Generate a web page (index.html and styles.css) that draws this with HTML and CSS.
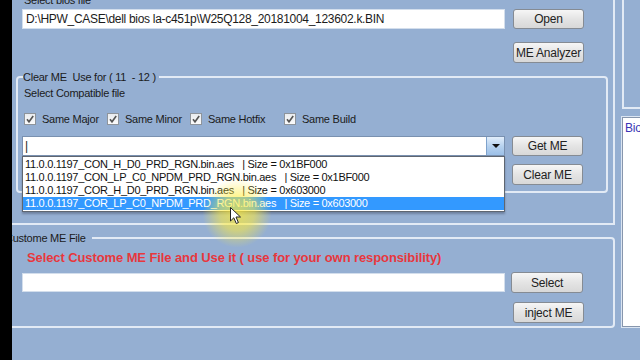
FILE: index.html
```html
<!DOCTYPE html>
<html lang="en">
<head>
  <meta charset="UTF-8">
  <meta name="viewport" content="width=device-width, initial-scale=1.0">
  <title>ME Tool</title>
  <link rel="stylesheet" href="styles.css">
</head>
<body>
  <div class="screen">
    <div class="edge"></div>

    <div class="main">
      <!-- bios file -->
      <div class="bios-group">
        <div class="caption">Select bios file</div>
        <div class="file-row">
          <div class="textbox">D:\HPW_CASE\dell bios la-c451p\W25Q128_20181004_123602.k.BIN</div>
          <button class="btn">Open</button>
          <span></span>
          <button class="btn btn-tall">ME Analyzer</button>
        </div>

        <fieldset class="group-box clear-me">
          <legend>Clear ME&nbsp; Use for ( 11&nbsp; - 12 )</legend>
          <div class="compat">Select Compatible file</div>
          <div class="checks">
            <label class="check"><span class="box"><svg width="10" height="10" viewBox="0 0 10 10"><path d="M2 5.2 L4 7.8 L8.2 2" fill="none" stroke="#555" stroke-width="1.6"/></svg></span>Same Major</label>
            <label class="check"><span class="box"><svg width="10" height="10" viewBox="0 0 10 10"><path d="M2 5.2 L4 7.8 L8.2 2" fill="none" stroke="#555" stroke-width="1.6"/></svg></span>Same Minor</label>
            <label class="check"><span class="box"><svg width="10" height="10" viewBox="0 0 10 10"><path d="M2 5.2 L4 7.8 L8.2 2" fill="none" stroke="#555" stroke-width="1.6"/></svg></span>Same Hotfix</label>
            <label class="check"><span class="box"><svg width="10" height="10" viewBox="0 0 10 10"><path d="M2 5.2 L4 7.8 L8.2 2" fill="none" stroke="#555" stroke-width="1.6"/></svg></span>Same Build</label>
          </div>
          <div class="combo-row">
            <div class="combo">
              <div class="combo-text">|</div>
              <div class="combo-arrow"><span class="tri"></span></div>
              <ul class="drop-list">
                <li>11.0.0.1197_CON_H_D0_PRD_RGN.bin.aes   | Size = 0x1BF000</li>
                <li>11.0.0.1197_CON_LP_C0_NPDM_PRD_RGN.bin.aes   | Size = 0x1BF000</li>
                <li>11.0.0.1197_COR_H_D0_PRD_RGN.bin.aes   | Size = 0x603000</li>
                <li class="selected">11.0.0.1197_COR_LP_C0_NPDM_PRD_RGN.bin.aes   | Size = 0x603000</li>
              </ul>
            </div>
            <button class="btn">Get ME</button>
            <span></span>
            <button class="btn btn-tall">Clear ME</button>
          </div>
        </fieldset>
      </div>

      <!-- custom ME -->
      <fieldset class="group-box custom">
        <legend>Custome ME File</legend>
        <div class="warn">Select Custome ME File and Use it ( use for your own responsibility)</div>
        <div class="inject-row">
          <div class="textbox textbox-low"></div>
          <button class="btn btn-tall">Select</button>
          <span></span>
          <button class="btn btn-tall btn-shift">inject ME</button>
        </div>
      </fieldset>
    </div>

    <div class="side">
      <div class="side-top"></div>
      <div class="side-list">Bios</div>
    </div>

    <div class="glow"></div>
    <svg class="pointer" width="12" height="18" viewBox="0 0 12 18">
      <path d="M0.5 0.5 L0.5 14 L3.8 10.8 L6.3 16.5 L8.4 15.6 L6 10 L10.5 10 Z" fill="#fff" stroke="#222" stroke-width="1"/>
    </svg>
  </div>
</body>
</html>
```

FILE: styles.css
```css
/* mise en page generale */
body {
  margin: 0;
  background: #000;
}

.screen {
  position: relative;
  display: flex;
  width: 640px;
  height: 360px;
  overflow: hidden;
  background: #95afd2;
  font-family: "Liberation Sans", Arial, sans-serif;
  font-size: 11px;
  letter-spacing: -0.25px;
  color: #1b1b1b;
}

.edge {
  position: relative;
  z-index: 2;
  width: 12px;
  flex-shrink: 0;
  background: #000;
}

.main {
  width: 603px;
  flex-shrink: 0;
}

.bios-group {
  padding: 0 5px 30px 4px;
  border-right: 2px solid #e2eaf5;
  border-bottom: 2px solid #e2eaf5;
}

.caption {
  margin: -7px 0 2px 8px;
  line-height: 14px;
}

.file-row {
  display: grid;
  grid-template-columns: 483px 71px;
  column-gap: 8px;
  row-gap: 13px;
  margin-left: 6px;
}

.textbox {
  height: 20px;
  box-sizing: border-box;
  padding: 0 3px;
  line-height: 18px;
  font-size: 12px;
  letter-spacing: -0.3px;
  background: #fff;
  border: 1px solid #d3deec;
  white-space: nowrap;
}

.btn {
  height: 20px;
  padding: 0;
  font-family: inherit;
  font-size: 12px;
  letter-spacing: -0.2px;
  color: #222;
  background: linear-gradient(#f6f6f6, #e4e4e4 50%, #d8d8d8);
  border: 1px solid #858b93;
  border-radius: 3px;
}

.btn-tall {
  height: 21px;
}

.group-box {
  margin: 0;
  padding: 0;
  min-width: 0;
  border: 2px solid #e2eaf5;
  border-radius: 4px;
}

.group-box legend {
  padding: 0 3px 0 0;
  line-height: 14px;
}

.clear-me {
  margin-top: 7px;
  padding-bottom: 6px;
}

.clear-me legend {
  margin-left: 5px;
}

.compat {
  margin: 2px 0 0 6px;
  line-height: 14px;
}

.checks {
  display: grid;
  grid-template-columns: 83px 83px 94px auto;
  margin: 12px 0 0 6px;
  height: 14px;
}

.check {
  display: flex;
  align-items: center;
  gap: 6px;
  font-size: 11px;
}

.box {
  display: flex;
  align-items: center;
  justify-content: center;
  width: 12px;
  height: 12px;
  box-sizing: border-box;
  border: 1px solid #8e949b;
  background: linear-gradient(#e9ecef, #fbfbfb);
}

.combo-row {
  display: grid;
  grid-template-columns: 483px 71px;
  column-gap: 7px;
  row-gap: 8px;
  margin: 10px 0 0 4px;
}

.combo {
  position: relative;
  display: flex;
  height: 20px;
  box-sizing: border-box;
  background: #fff;
  border: 1px solid #7a91b0;
}

.combo-text {
  flex: 1;
  padding-left: 2px;
  line-height: 18px;
  font-size: 12px;
}

.combo-arrow {
  display: flex;
  align-items: center;
  justify-content: center;
  width: 17px;
  background: linear-gradient(#e2eefb, #b4d0ee 55%, #9cc0e8);
  border-left: 1px solid #7ea2cc;
}

.tri {
  width: 0;
  height: 0;
  border-left: 4px solid transparent;
  border-right: 4px solid transparent;
  border-top: 4px solid #111;
}

.drop-list {
  position: absolute;
  z-index: 3;
  top: 19px;
  left: -1px;
  width: 483px;
  box-sizing: border-box;
  margin: 0;
  padding: 1px 0 1px 0;
  list-style: none;
  background: #fff;
  border: 1px solid #5f6670;
  box-shadow: 0 2px 2px rgba(40, 50, 70, 0.35);
}

.drop-list li {
  height: 13px;
  line-height: 13px;
  padding-left: 2px;
  font-size: 11px;
  letter-spacing: -0.3px;
  white-space: pre;
  color: #111;
}

.drop-list li.selected {
  background: #3399ff;
  color: #fff;
}

.custom {
  margin-top: 6px;
  padding-bottom: 3px;
  border-left: none;
  border-radius: 0 4px 4px 0;
}

.custom legend {
  margin-left: -7px;
  padding-right: 6px;
}

.warn {
  margin: 6px 0 0 15px;
  line-height: 14px;
  font-size: 13px;
  font-weight: bold;
  letter-spacing: -0.1px;
  color: #e8373d;
}

.inject-row {
  display: grid;
  grid-template-columns: 483px 72px;
  column-gap: 6px;
  row-gap: 9px;
  margin: 7px 0 0 10px;
}

.textbox-low {
  margin-top: 1px;
  height: 19px;
}

.btn-shift {
  margin-left: 2px;
  width: 71px;
}

.side {
  flex: 1;
  padding-left: 7px;
}

.side-top {
  height: 107px;
  border-left: 2px solid #e2eaf5;
  border-bottom: 2px solid #e2eaf5;
}

.side-list {
  height: 210px;
  margin-top: 8px;
  box-sizing: border-box;
  padding: 3px 0 0 2px;
  line-height: 14px;
  font-size: 12px;
  color: #3b35b5;
  background: #fff;
  border: 1px solid #8796ad;
  outline: 1px solid #dbe5f2;
}

/* surbrillance du curseur */
.glow {
  position: absolute;
  z-index: 4;
  left: 202px;
  top: 178px;
  width: 70px;
  height: 70px;
  border-radius: 50%;
  background: radial-gradient(circle, rgba(255, 236, 60, 0.75) 0%, rgba(255, 236, 60, 0.55) 35%, rgba(255, 236, 60, 0) 70%);
}

.pointer {
  position: absolute;
  z-index: 5;
  left: 230px;
  top: 207px;
}
```
